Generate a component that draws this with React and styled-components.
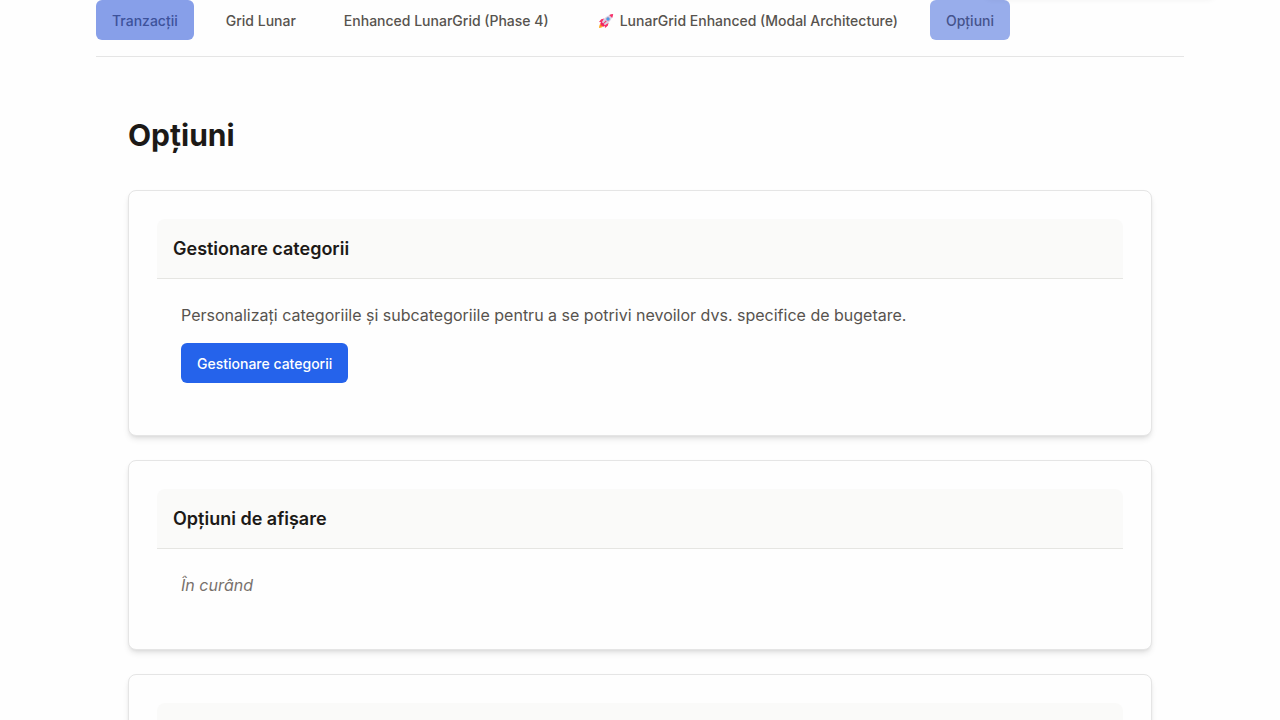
import React from "react";
import styled, { createGlobalStyle } from "styled-components";

const GlobalStyle = createGlobalStyle`
  *, *::before, *::after { box-sizing: border-box; }
  body {
    margin: 0;
    background: #fefefe;
    color: #1c1917;
    font-family: Inter, sans-serif;
    font-size: 16px;
    line-height: 1.5;
    height: 100vh;
    overflow: hidden;
  }
  h1, h2, p { margin: 0; }
`;

const Page = styled.div`
  width: 1088px;
  margin: 0 auto;
`;

const Tabs = styled.nav`
  display: flex;
  gap: 16px;
  padding-bottom: 16px;
  border-bottom: 1px solid #e5e5e5;
`;

const Tab = styled.button`
  display: flex;
  align-items: center;
  height: 40px;
  padding: 2px 16px 0;
  border: 0;
  border-radius: 6px;
  background: ${(p) => p.$fill || "transparent"};
  color: ${(p) => p.$ink || "#57534e"};
  font: 500 14px/20px Inter, sans-serif;
  white-space: nowrap;
`;

const Rocket = styled.svg`
  width: 16px;
  height: 16px;
  margin: 0 6px 0 1px;
  flex: none;
`;

const Content = styled.main`
  padding: 60px 32px 0;
`;

const Title = styled.h1`
  font-size: 30px;
  font-weight: 700;
  line-height: 36px;
  margin-bottom: 37px;
`;

const Card = styled.section`
  padding: 28px;
  margin-bottom: 24px;
  border: 1px solid #e5e5e5;
  border-radius: 8px;
  background: #fefefe;
  box-shadow: 0 4px 6px -1px rgba(0, 0, 0, 0.1), 0 2px 4px -2px rgba(0, 0, 0, 0.1);
`;

const CardHeader = styled.header`
  padding: 16px;
  border-bottom: 1px solid #e5e5e2;
  border-radius: 8px 8px 0 0;
  background: #fafaf9;
`;

const CardTitle = styled.h2`
  font-size: 18px;
  font-weight: 600;
  line-height: 27px;
`;

const CardBody = styled.div`
  padding: 24px;
`;

const Text = styled.p`
  color: ${(p) => (p.$muted ? "#78716c" : "#57534e")};
  font-style: ${(p) => (p.$muted ? "italic" : "normal")};
`;

const PrimaryButton = styled.button`
  display: block;
  height: 40px;
  margin-top: 16px;
  padding: 2px 16px 0;
  border: 0;
  border-radius: 6px;
  background: #2563eb;
  color: #fefefe;
  font: 500 14px/20px Inter, sans-serif;
`;

const Toast = styled.div`
  position: fixed;
  top: -60px;
  left: 984px;
  width: 232px;
  height: 56px;
  border-radius: 8px;
  box-shadow: 0 4px 6px -1px rgba(0, 0, 0, 0.07);
`;

function RocketIcon() {
  return (
    <Rocket viewBox="0 0 16 16" aria-hidden="true">
      <path d="M1 15c0-2.500.8-4.200 2.700-4.700l2 2C5 14.200 3.500 15 1 15z" fill="#ffb02e" />
      <path d="M2 13.500c.1-1.400.8-2.400 2-2.700l1 1c-.4 1.100-1.400 1.700-3 1.700z" fill="#f9643f" />
      <path d="M6.300 5.400 3.200 6.200 1 9l3.300.5zM10.600 9.700l-.8 3.100L7 15l-.5-3.300z" fill="#f8316a" />
      <path d="M4 9.400C5.500 5.500 8.700 2.300 14.800 1.200 13.700 7.300 10.500 10.500 6.600 12z" fill="#d8d2e3" />
      <path d="M11.200 1.900c1.100-.4 2.300-.7 4-.9-.2 1.500-.5 2.800-1 4z" fill="#f8316a" />
      <path d="m3.500 8.800 3.700 3.700-1.900 1.300-3.100-3.100z" fill="#f0225f" />
      <path d="m7.900 7.400.8.800-3.900 3.500-.5-.5z" fill="#f8316a" />
      <circle cx="10" cy="6" r="1.700" fill="#6380c5" />
      <circle cx="10" cy="6" r="1" fill="#3faaf0" />
    </Rocket>
  );
}

export default function App() {
  return (
    <>
      <GlobalStyle />
      <Page>
        <Tabs>
          <Tab $fill="#879fe9" $ink="#3d529b">Tranzacții</Tab>
          <Tab>Grid Lunar</Tab>
          <Tab>Enhanced LunarGrid (Phase 4)</Tab>
          <Tab><RocketIcon />LunarGrid Enhanced (Modal Architecture)</Tab>
          <Tab $fill="#98adeb" $ink="#45538b">Opțiuni</Tab>
        </Tabs>
        <Content>
          <Title>Opțiuni</Title>
          <Card>
            <CardHeader><CardTitle>Gestionare categorii</CardTitle></CardHeader>
            <CardBody>
              <Text>Personalizați categoriile și subcategoriile pentru a se potrivi nevoilor dvs. specifice de bugetare.</Text>
              <PrimaryButton>Gestionare categorii</PrimaryButton>
            </CardBody>
          </Card>
          <Card>
            <CardHeader><CardTitle>Opțiuni de afișare</CardTitle></CardHeader>
            <CardBody><Text $muted>În curând</Text></CardBody>
          </Card>
          <Card>
            <CardHeader><CardTitle>&nbsp;</CardTitle></CardHeader>
            <CardBody><Text $muted>&nbsp;</Text></CardBody>
          </Card>
        </Content>
      </Page>
      <Toast />
    </>
  );
}
